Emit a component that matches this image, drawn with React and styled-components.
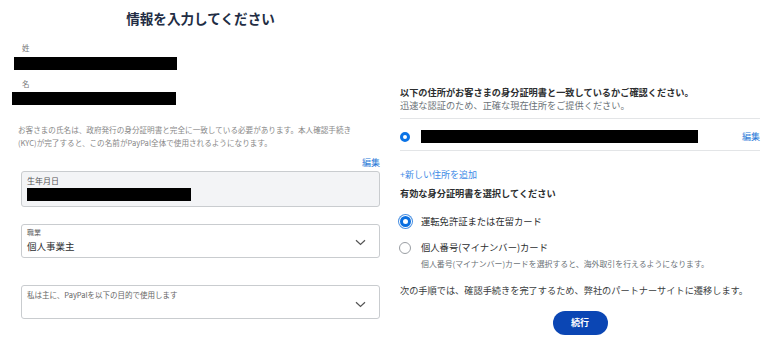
import React from "react";
import styled, { createGlobalStyle } from "styled-components";

const Global = createGlobalStyle`
  html, body { margin: 0; padding: 0; background: #fff; }
  body { font-family: "Noto Sans CJK JP", "Noto Sans", sans-serif; color: #2c2e2f; }
  * { box-sizing: border-box; }
`;

const Page = styled.div`
  width: 780px;
  height: 345px;
  display: grid;
  grid-template-columns: 390px 390px;
  overflow: hidden;
`;

const LeftCol = styled.div`
  padding: 9px 10px 0 12px;
  display: flex;
  flex-direction: column;
`;

const RightCol = styled.div`
  padding: 86px 20px 0 10px;
  display: flex;
  flex-direction: column;
`;

const Title = styled.h1`
  margin: 0 0 0 9px;
  font-size: 13.6px;
  line-height: 18px;
  font-weight: 700;
  text-align: center;
  color: #222d44;
`;

const NameLabel = styled.div`
  margin-top: ${(p) => p.$mt}px;
  padding-left: 10px;
  font-size: 7.5px;
  line-height: 12px;
  color: #777;
`;

const Redact = styled.div`
  background: #000;
  height: 13px;
  width: ${(p) => p.$w}px;
  margin-left: ${(p) => p.$ml || 0}px;
  margin-top: ${(p) => p.$mt || 0}px;
  flex-shrink: 0;
`;

const Disclaimer = styled.p`
  margin: 18px 0 0 6px;
  font-size: 7.6px;
  line-height: 13px;
  color: #888;
  white-space: nowrap;
`;

const EditLink = styled.a`
  margin-top: ${(p) => p.$mt || 0}px;
  align-self: ${(p) => (p.$inline ? "center" : "flex-end")};
  font-size: 9px;
  line-height: 12px;
  color: #2a7ad8;
  text-decoration: none;
`;

const Field = styled.div`
  margin: ${(p) => p.$mt}px 0 0 9px;
  height: ${(p) => p.$h}px;
  border: 1px solid #c9cccf;
  border-radius: 3px;
  background: ${(p) => (p.$readonly ? "#f3f4f6" : "#fff")};
  padding: ${(p) => p.$pad};
  display: flex;
  align-items: ${(p) => (p.$select ? "center" : "stretch")};
`;

const FieldBody = styled.div`
  flex: 1;
  display: flex;
  flex-direction: column;
  align-self: stretch;
`;

const FieldLabel = styled.div`
  font-size: ${(p) => p.$size || 7.5}px;
  line-height: 10px;
  color: ${(p) => p.$color || "#666"};
`;

const FieldValue = styled.div`
  margin-top: 2px;
  font-size: 9.5px;
  line-height: 14px;
  color: #2c2e2f;
`;

const Chevron = styled.svg`
  width: 11px;
  height: 7px;
  margin-right: 13px;
  flex-shrink: 0;
`;

const Heading = styled.div`
  font-size: 9.2px;
  line-height: ${(p) => p.$lh || 12}px;
  font-weight: 700;
  color: #2c2e2f;
  margin-top: ${(p) => p.$mt || 0}px;
  white-space: nowrap;
`;

const SubHeading = styled.div`
  font-size: 9.2px;
  line-height: 13.4px;
  color: #6c7378;
  white-space: nowrap;
`;

const Divider = styled.div`
  margin-top: ${(p) => p.$mt || 0}px;
  height: 1px;
  background: #e3e5e7;
`;

const AddressRow = styled.div`
  display: flex;
  align-items: center;
  height: 31px;
  padding: 5px 0 0;
`;

const SmallRadio = styled.span`
  width: 10px;
  height: 10px;
  border-radius: 50%;
  border: 3px solid #0a73e6;
  background: #fff;
  flex-shrink: 0;
`;

const Spacer = styled.div`
  flex: 1;
`;

const AddLink = styled.a`
  margin-top: 18px;
  font-size: 9px;
  line-height: 12px;
  color: #3d8ae6;
  text-decoration: none;
`;

const Option = styled.div`
  margin-top: ${(p) => p.$mt}px;
  display: grid;
  grid-template-columns: 21px 1fr;
  align-items: start;
`;

const Radio = styled.span`
  width: ${(p) => (p.$checked ? 11 : 12)}px;
  height: ${(p) => (p.$checked ? 11 : 12)}px;
  margin: ${(p) => (p.$checked ? "2px 0 0 0" : "2px 0 0 -1px")};
  border-radius: 50%;
  background: #fff;
  border: ${(p) => (p.$checked ? "3.5px solid #0a6fe0" : "1px solid #9a9ea3")};
  box-shadow: ${(p) =>
    p.$checked ? "0 0 0 1px #fff, 0 0 0 2px #4a90e2" : "none"};
`;

const OptionText = styled.div`
  font-size: 9.3px;
  line-height: 15px;
  color: #2c2e2f;
  white-space: nowrap;
`;

const OptionHint = styled.div`
  margin-top: 3px;
  font-size: 7.9px;
  line-height: 11px;
  color: #6c7378;
  white-space: nowrap;
`;

const Footer = styled.p`
  margin: 15px 0 0;
  font-size: 9.2px;
  line-height: 12px;
  color: #3a3d40;
  white-space: nowrap;
`;

const Button = styled.button`
  margin-top: 15px;
  align-self: center;
  width: 55px;
  height: 24px;
  border: none;
  border-radius: 12px;
  background: #0b46b4;
  color: #fff;
  font-family: inherit;
  font-size: 9px;
  font-weight: 700;
  cursor: pointer;
`;

const ChevronIcon = () => (
  <Chevron viewBox="0 0 11 7">
    <path d="M1 1.2 L5.5 5.5 L10 1.2" fill="none" stroke="#555" strokeWidth="1.2" />
  </Chevron>
);

export default function App() {
  return (
    <>
      <Global />
      <Page>
        <LeftCol>
          <Title>情報を入力してください</Title>
          <NameLabel $mt={15}>姓</NameLabel>
          <Redact $w={163} $ml={2} $mt={3} />
          <NameLabel $mt={8}>名</NameLabel>
          <Redact $w={164} $mt={2} />
          <Disclaimer>
            お客さまの氏名は、政府発行の身分証明書と完全に一致している必要があります。本人確認手続き
            <br />
            (KYC)が完了すると、この名前がPayPal全体で使用されるようになります。
          </Disclaimer>
          <EditLink $mt={8}>編集</EditLink>
          <Field $mt={2} $h={36} $readonly $pad="4px 5px">
            <FieldBody>
              <FieldLabel $size={8} $color="#555">生年月日</FieldLabel>
              <Redact $w={164} $mt={2} />
            </FieldBody>
          </Field>
          <Field $mt={17} $h={34} $select $pad="2px 0 0 5px">
            <FieldBody>
              <FieldLabel $size={7}>職業</FieldLabel>
              <FieldValue>個人事業主</FieldValue>
            </FieldBody>
            <ChevronIcon />
          </Field>
          <Field $mt={27} $h={34} $select $pad="4px 0 0 5px">
            <FieldBody>
              <FieldLabel $size={7.5}>私は主に、PayPalを以下の目的で使用します</FieldLabel>
            </FieldBody>
            <ChevronIcon />
          </Field>
        </LeftCol>

        <RightCol>
          <Heading $lh={13.4}>以下の住所がお客さまの身分証明書と一致しているかご確認ください。</Heading>
          <SubHeading>迅速な認証のため、正確な現在住所をご提供ください。</SubHeading>
          <Divider $mt={5} />
          <AddressRow>
            <SmallRadio />
            <Redact $w={277} $ml={11} />
            <Spacer />
            <EditLink $inline>編集</EditLink>
          </AddressRow>
          <Divider />
          <AddLink>+新しい住所を追加</AddLink>
          <Heading $mt={6}>有効な身分証明書を選択してください</Heading>
          <Option $mt={15}>
            <Radio $checked />
            <OptionText>運転免許証または在留カード</OptionText>
          </Option>
          <Option $mt={11}>
            <Radio />
            <div>
              <OptionText>個人番号(マイナンバー)カード</OptionText>
              <OptionHint>個人番号(マイナンバー)カードを選択すると、海外取引を行えるようになります。</OptionHint>
            </div>
          </Option>
          <Footer>次の手順では、確認手続きを完了するため、弊社のパートナーサイトに遷移します。</Footer>
          <Button>続行</Button>
        </RightCol>
      </Page>
    </>
  );
}
